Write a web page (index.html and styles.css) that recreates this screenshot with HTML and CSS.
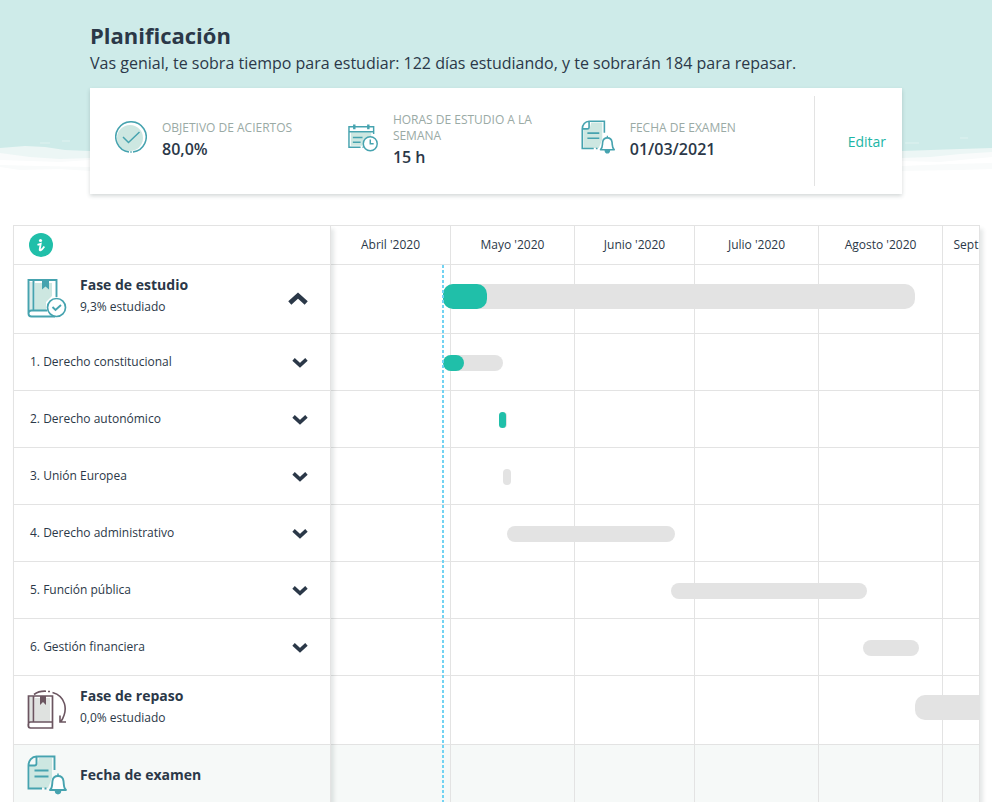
FILE: index.html
```
<!DOCTYPE html>
<html lang="es">
<head>
  <meta charset="UTF-8">
  <meta name="viewport" content="width=device-width, initial-scale=1.0">
  <title>Planificación</title>
  <link rel="stylesheet" href="styles.css">
</head>
<body>
  <!-- shared icons -->
  <svg class="defs" aria-hidden="true">
    <symbol id="doc-bell" viewBox="0 0 40 40">
      <path d="M3 11h7l2-8h13v20l-4 10H3z" fill="#cde7e1"/>
      <path d="M1.500 10.500V33.500H15M17.500 33.500h2M10.500 1.500H27.500V15M1.500 10.500c0-5 3.500-9 8-9v7c0 1.500-.7 2-2 2z" fill="none" stroke="#46a3af" stroke-width="1.900"/>
      <path d="M7.500 15.500h14M7.500 21.500h14" stroke="#46a3af" stroke-width="1.900"/>
      <path d="M23 35c2.500-2 2-5 2.500-9 .4-3 2.300-5 5.500-5s5.100 2 5.500 5c.5 4 0 7 2.500 9z" fill="#fff" stroke="#46a3af" stroke-width="1.900" stroke-linejoin="round"/>
      <path d="M31 21v-2.500M28.500 36c.3 3.500 4.700 3.500 5 0z" fill="#46a3af" stroke="#46a3af" stroke-width="1.500"/>
    </symbol>
    <symbol id="chevron" viewBox="0 0 20 14">
      <path d="M1.800 3l8.200 7.500L18.200 3" fill="none" stroke="#2b3848" stroke-width="4.600"/>
    </symbol>
  </svg>

  <svg class="paint" viewBox="0 0 992 180" preserveAspectRatio="none" aria-hidden="true">
    <path d="M0 0H992V169L960 170 902 171 500 168 90 171 60 169 20 170 0 167z" fill="#f9fbfb"/>
    <path d="M0 160L30 161 60 162 90 160V167L40 166 0 165zM902 161L940 162 992 157V163L950 164 902 166z" fill="#fff"/>
    <path d="M0 0H992V152L960 154 930 157 902 158 500 155 90 158 60 159 30 157 0 153z" fill="#ecf6f5"/>
    <path d="M0 0H992V148L960 149 902 151 500 148 90 151 65 150 45 147 25 146 0 148z" fill="#ceebe9"/>
    <path d="M40 143h10M62 141h8M905 143h14M960 138h8" stroke="#dff2f0"/>
  </svg>

  <header class="header">
    <h1 class="title">Planificación</h1>
    <p class="subtitle">Vas genial, te sobra tiempo para estudiar: 122 días estudiando, y te sobrarán 184 para repasar.</p>
    <div class="card">
      <div class="stats">
        <div class="stat">
          <svg class="stat-icon" width="32" height="32" viewBox="0 0 32 32" aria-hidden="true">
            <circle cx="15" cy="17" r="13" fill="#cde7e1"/>
            <path d="M14 31A15.200 15.200 0 1 1 18 31" fill="none" stroke="#46a3af" stroke-width="1.500"/>
            <path d="M15.300 31.100h1.400" stroke="#46a3af" stroke-width="1.500"/>
            <path d="M8 16l5.500 5.500L24.500 11" fill="none" stroke="#46a3af" stroke-width="1.500"/>
          </svg>
          <div class="stat-text">
            <p class="label">OBJETIVO DE ACIERTOS</p>
            <p class="value">80,0%</p>
          </div>
        </div>
        <div class="stat">
          <svg class="stat-icon" width="30" height="30" viewBox="0 0 31 30" aria-hidden="true">
            <path d="M3 10h21v7l-7 7H3z" fill="#cde7e1"/>
            <path d="M13 25.500H1V4.500h25.500V12M1 9.500h25.500M15 25.500h1" fill="none" stroke="#46a3af" stroke-width="1.500"/>
            <path d="M6.500 2v5M21 2v5" stroke="#46a3af" stroke-width="2.500"/>
            <path d="M5 15.500h10M5 20.500h8" stroke="#46a3af" stroke-width="1.500"/>
            <circle cx="23" cy="22" r="7.200" fill="#fff" stroke="#46a3af" stroke-width="1.500"/>
            <path d="M23 17.500V22h3.500" fill="none" stroke="#46a3af" stroke-width="1.500"/>
          </svg>
          <div class="stat-text">
            <p class="label">HORAS DE ESTUDIO A LA SEMANA</p>
            <p class="value">15 h</p>
          </div>
        </div>
        <div class="stat">
          <svg class="stat-icon" width="34" height="34" aria-hidden="true"><use href="#doc-bell"/></svg>
          <div class="stat-text">
            <p class="label">FECHA DE EXAMEN</p>
            <p class="value">01/03/2021</p>
          </div>
        </div>
      </div>
      <div class="edit"><a href="#" class="edit-link">Editar</a></div>
    </div>
  </header>

  <main class="gantt">
    <div class="sidebar">
      <div class="row row-head">
        <button type="button" class="info" aria-label="Información">
          <svg width="24" height="24" viewBox="0 0 24 24" aria-hidden="true">
            <circle cx="12" cy="12" r="12" fill="#20bfa9"/>
            <circle cx="11.500" cy="7.500" r="1.600" fill="#fff"/>
            <path d="M8.500 11.800l3.200-1-1 5.700c-.2 1.500 1.800 1.200 4.600-3" fill="none" stroke="#fff" stroke-width="1.800"/>
          </svg>
        </button>
      </div>
      <div class="row row-phase">
        <svg class="phase-icon" width="40" height="40" viewBox="0 0 40 40" aria-hidden="true">
          <path d="M2 4h5v28H2z" fill="#dcebe9"/>
          <path d="M8 5h17v13l-6 6v8H8z" fill="#cde7e1"/>
          <path d="M20 32.500H4.500c-4 0-4 6 0 6H28M1.500 36V2h28V19M6.500 2v30" fill="none" stroke="#46a3af" stroke-width="1.900"/>
          <path d="M15 2h7v9.500l-3.500-3-3.500 3z" fill="#46a3af"/>
          <circle cx="29.500" cy="29.500" r="9" fill="#fff" stroke="#46a3af" stroke-width="1.700"/>
          <path d="M25.500 29l3 3 5.500-5" fill="none" stroke="#46a3af" stroke-width="1.900"/>
        </svg>
        <div class="phase-text">
          <h2 class="phase-title">Fase de estudio</h2>
          <p class="phase-sub">9,3% estudiado</p>
        </div>
        <button type="button" class="toggle toggle-open" aria-label="Contraer"><svg width="20" height="14"><use href="#chevron"/></svg></button>
      </div>
      <div class="row">
        <span class="topic">1. Derecho constitucional</span>
        <button type="button" class="toggle" aria-label="Desplegar"><svg width="16" height="11"><use href="#chevron"/></svg></button>
      </div>
      <div class="row">
        <span class="topic">2. Derecho autonómico</span>
        <button type="button" class="toggle" aria-label="Desplegar"><svg width="16" height="11"><use href="#chevron"/></svg></button>
      </div>
      <div class="row">
        <span class="topic">3. Unión Europea</span>
        <button type="button" class="toggle" aria-label="Desplegar"><svg width="16" height="11"><use href="#chevron"/></svg></button>
      </div>
      <div class="row">
        <span class="topic">4. Derecho administrativo</span>
        <button type="button" class="toggle" aria-label="Desplegar"><svg width="16" height="11"><use href="#chevron"/></svg></button>
      </div>
      <div class="row">
        <span class="topic">5. Función pública</span>
        <button type="button" class="toggle" aria-label="Desplegar"><svg width="16" height="11"><use href="#chevron"/></svg></button>
      </div>
      <div class="row">
        <span class="topic">6. Gestión financiera</span>
        <button type="button" class="toggle" aria-label="Desplegar"><svg width="16" height="11"><use href="#chevron"/></svg></button>
      </div>
      <div class="row row-phase">
        <svg class="phase-icon" width="40" height="40" viewBox="0 0 40 40" aria-hidden="true">
          <path d="M2 8h4v25H2zM8 9h15v24H8z" fill="#dfe2e0"/>
          <path d="M3.500 33h22v6h-22c-3 0-3-6 0-6zM1.500 36.500V7h24v26M6.500 7v26" fill="none" stroke="#6b5560" stroke-width="1.700"/>
          <path d="M13 7h6v9l-3-3-3 3z" fill="#6b5560"/>
          <path d="M7 5.500c4-3 8-3.500 12-3.300M21 2.500h2M25.500 3.500C38 7 42 20 34 32.500M33 26.500V33h6" fill="none" stroke="#6b5560" stroke-width="1.600"/>
        </svg>
        <div class="phase-text">
          <h2 class="phase-title">Fase de repaso</h2>
          <p class="phase-sub">0,0% estudiado</p>
        </div>
      </div>
      <div class="row row-exam">
        <svg class="phase-icon" width="40" height="40" aria-hidden="true"><use href="#doc-bell"/></svg>
        <h2 class="phase-title">Fecha de examen</h2>
      </div>
    </div>

    <div class="timeline">
      <div class="chart">
        <div class="months">
          <div class="month">Abril '2020</div>
          <div class="month">Mayo '2020</div>
          <div class="month">Junio '2020</div>
          <div class="month">Julio '2020</div>
          <div class="month">Agosto '2020</div>
          <div class="month">Septiembre '2020</div>
        </div>
        <div class="row row-head"></div>
        <!-- 1 day = 4px, starting on April 1st -->
        <div class="row row-phase track">
          <div class="bar" style="margin-left: 112px; width: 472px"><div class="done" style="width: 44px"></div></div>
        </div>
        <div class="row track">
          <div class="bar" style="margin-left: 112px; width: 60px"><div class="done" style="width: 21px"></div></div>
        </div>
        <div class="row track">
          <div class="bar" style="margin-left: 168px; width: 8px"><div class="done" style="width: 7px"></div></div>
        </div>
        <div class="row track">
          <div class="bar" style="margin-left: 172px; width: 8px"></div>
        </div>
        <div class="row track">
          <div class="bar" style="margin-left: 176px; width: 168px"></div>
        </div>
        <div class="row track">
          <div class="bar" style="margin-left: 340px; width: 196px"></div>
        </div>
        <div class="row track">
          <div class="bar" style="margin-left: 532px; width: 56px"></div>
        </div>
        <div class="row row-phase track">
          <div class="bar" style="margin-left: 584px; width: 736px"></div>
        </div>
        <div class="row row-exam"></div>
        <div class="today" style="left: 111px"></div>
      </div>
    </div>
  </main>
</body>
</html>
```

FILE: styles.css
```
* {
  box-sizing: border-box;
}
body {
  margin: 0;
  background: #fff;
  color: #2b3848;
  font-family: "Open Sans", sans-serif;
  font-size: 12px;
}
h1, h2, p {
  margin: 0;
}
button {
  background: none;
  border: none;
  padding: 0;
  cursor: pointer;
}
svg {
  display: block;
  flex: none;
}
.defs {
  position: absolute;
  width: 0;
  height: 0;
}
.paint {
  position: absolute;
  top: 0;
  left: 0;
  z-index: -1;
  width: 100%;
  height: 180px;
}

/* header */
.header {
  padding: 20px 90px 0;
}
.title {
  font-size: 22px;
  line-height: 30px;
  font-weight: bold;
}
.subtitle {
  font-size: 16px;
  line-height: 26px;
}
.card {
  display: flex;
  min-height: 106px;
  margin-top: 12px;
  background: #fff;
  box-shadow: 0 2px 4px rgba(40, 60, 60, 0.2);
}
.stats {
  flex: 1;
  display: grid;
  grid-template-columns: repeat(3, 1fr);
  padding-left: 25px;
}
.stat {
  display: flex;
  align-items: center;
  gap: 15px;
}
.stat-icon {
  margin-bottom: 8px;
}
.stat-text {
  max-width: 150px;
}
.label {
  color: #9aaaa5;
  font-size: 12px;
  line-height: 16px;
}
.value {
  font-size: 16px;
  line-height: 26px;
  font-weight: 600;
}
.edit {
  display: flex;
  align-items: center;
  margin: 8px 0;
  padding: 0 16px 0 33px;
  border-left: 1px solid #e3e3e3;
}
.edit-link {
  color: #20b5a5;
  font-size: 14px;
  text-decoration: none;
}

/* gantt */
.gantt {
  display: flex;
  margin: 31px 12px 0 13px;
}
.sidebar {
  position: relative;
  z-index: 1;
  flex: none;
  width: 318px;
  border-left: 1px solid #e3e3e3;
  border-right: 1px solid #e3e3e3;
  box-shadow: 3px 4px 4px rgba(40, 60, 60, 0.12);
}
.timeline {
  flex: 1;
  min-width: 0;
  border-right: 1px solid #e3e3e3;
  box-shadow: 3px 4px 4px rgba(40, 60, 60, 0.12);
}
.chart {
  position: relative;
  overflow: hidden;
}
.row {
  display: flex;
  align-items: center;
  height: 57px;
  padding: 0 22px 0 16px;
  border-bottom: 1px solid #e3e3e3;
}
.sidebar .row {
  background: #fff;
}
.row-head {
  height: 40px;
  padding-left: 15px;
  border-top: 1px solid #e3e3e3;
}
.row-phase {
  height: 69px;
  padding-left: 13px;
}
.row-exam,
.sidebar .row-exam {
  height: 57px;
  padding: 2px 13px 0;
  background: #f6f9f8;
  border-bottom: none;
}
.chart .row-exam {
  background: rgba(30, 90, 80, 0.04);
}
.topic {
  padding-bottom: 2px;
}
.phase-icon {
  margin-right: 13px;
}
.row-phase .phase-icon {
  margin-bottom: 2px;
}
.phase-text {
  align-self: flex-start;
  padding-top: 9px;
}
.phase-title {
  font-size: 14px;
  line-height: 22px;
  font-weight: bold;
}
.phase-sub {
  line-height: 22px;
}
.toggle {
  margin-left: auto;
}
.toggle-open svg {
  transform: rotate(180deg);
}
.months {
  position: absolute;
  top: 0;
  bottom: 0;
  left: 0;
  display: grid;
  grid-template-columns: 120px 124px 120px 124px 124px 120px;
}
.month {
  padding-top: 1px;
  border-right: 1px solid #e3e3e3;
  line-height: 38px;
  text-align: center;
}
.track {
  position: relative;
  align-items: flex-start;
  padding: 21px 0 0;
}
.bar {
  flex: none;
  height: 16px;
  border-radius: 8px;
  background: #e3e3e3;
}
.row-phase .bar {
  height: 25px;
  border-radius: 10px;
}
.row-phase.track {
  padding-top: 19px;
}
.done {
  height: 100%;
  border-radius: inherit;
  background: #20bfa9;
}
.today {
  position: absolute;
  top: 40px;
  bottom: 0;
  width: 2px;
  background: repeating-linear-gradient(#72d3f2 0 3px, transparent 3px 5px);
}
```
